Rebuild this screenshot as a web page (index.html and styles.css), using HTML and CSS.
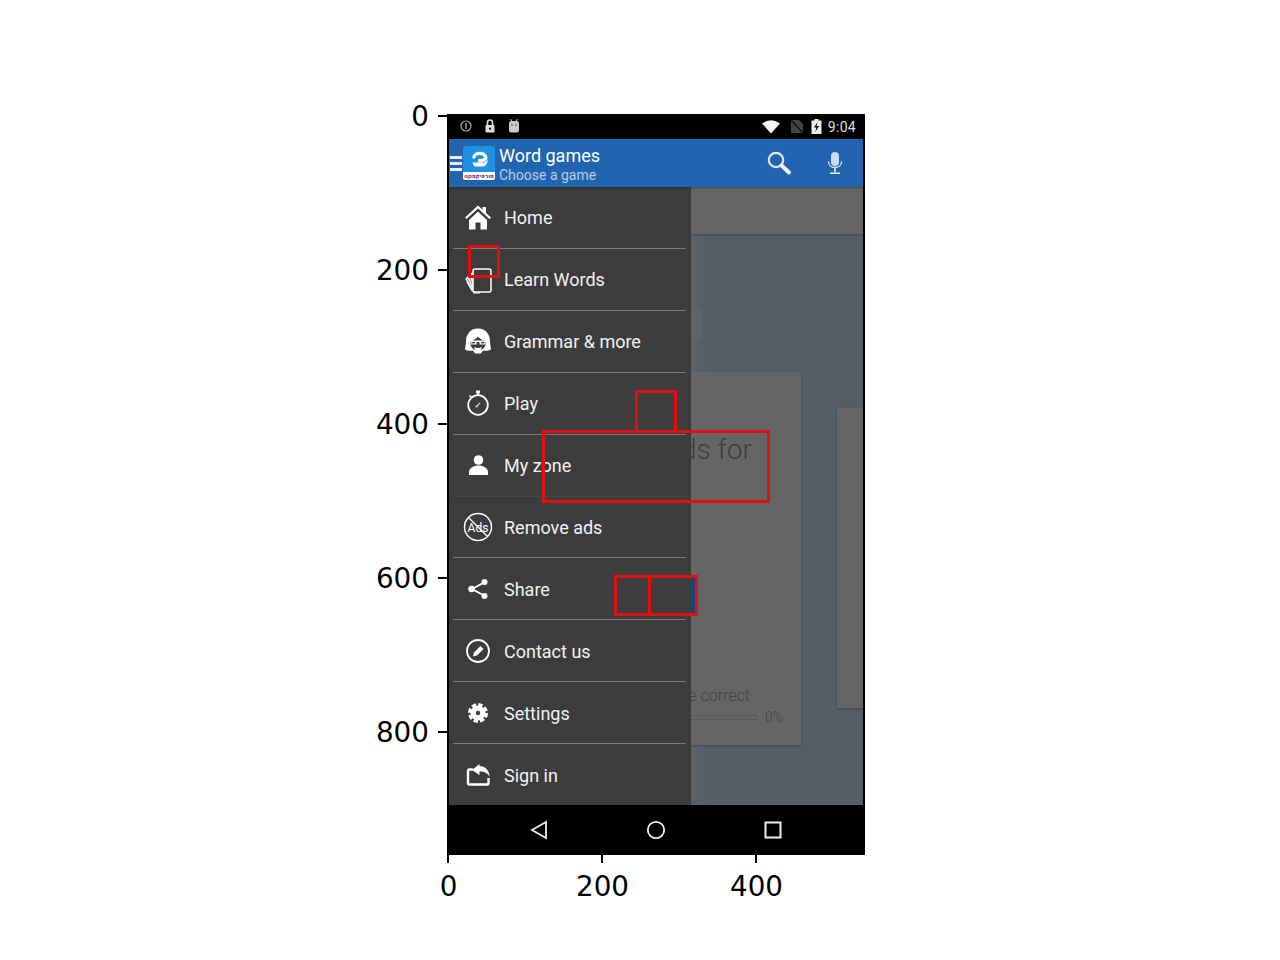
FILE: index.html
```html
<!DOCTYPE html>
<html lang="en">
<head>
    <meta charset="UTF-8">
    <meta name="viewport" content="width=device-width, initial-scale=1.0">
    <title>Word games - annotated screenshot</title>
    <link rel="stylesheet" href="styles.css">
</head>
<body>
<div class="figure">

    <!-- axis ticks -->
    <div class="ytick yt0"><span>0</span></div>
    <div class="ytick yt200"><span>200</span></div>
    <div class="ytick yt400"><span>400</span></div>
    <div class="ytick yt600"><span>600</span></div>
    <div class="ytick yt800"><span>800</span></div>
    <div class="xtick xt0"><span>0</span></div>
    <div class="xtick xt200"><span>200</span></div>
    <div class="xtick xt400"><span>400</span></div>

    <div class="axes">
        <!-- status bar -->
        <div class="status">
            <div class="status-left">
                <svg width="14" height="14" viewBox="0 0 14 14"><circle cx="7" cy="7" r="5" fill="none" stroke="#aaa" stroke-width="1.2"/><rect x="6.3" y="4" width="1.4" height="6" fill="#aaa"/></svg>
                <svg width="14" height="16" viewBox="0 0 14 16"><path d="M4.5 7V4.500a2.500 2.500 0 0 1 5 0V7" fill="none" stroke="#ddd" stroke-width="1.6"/><rect x="2.500" y="7" width="9" height="7.500" rx="1" fill="#ddd"/><circle cx="7" cy="10.700" r="1.100" fill="#000"/></svg>
                <svg width="14" height="16" viewBox="0 0 14 16"><path d="M3.500 1l1.400 2.500M10.500 1L9.100 3.500" stroke="#ccc" stroke-width="1"/><rect x="2" y="3" width="10" height="11.500" rx="2.500" fill="#ccc"/><circle cx="5" cy="7" r=".8" fill="#333"/><circle cx="9" cy="7" r=".8" fill="#333"/></svg>
            </div>
            <div class="status-right">
                <svg width="20" height="15" viewBox="0 0 20 15"><path d="M1 4.500Q10-2 19 4.500L10 14.500z" fill="#f4f4f4"/></svg>
                <svg width="14" height="15" viewBox="0 0 14 15"><path d="M1 1h8l4 4v9H1z" fill="#444"/><path d="M1 1l12 13" stroke="#111" stroke-width="1.400"/></svg>
                <svg width="11" height="15" viewBox="0 0 11 15"><path d="M3.500 0h4v1.500H10.500V15H.5V1.500h3z" fill="#eee"/><path d="M6.500 3L3 8.500h2.300L4.300 13 8 7H5.700z" fill="#111"/></svg>
                <span class="clock">9:04</span>
            </div>
        </div>

        <!-- app bar -->
        <div class="appbar">
            <div class="burger"><i></i><i></i><i></i></div>
            <div class="logo">
                <svg width="32" height="26" viewBox="0 0 32 26"><path d="M11 11C12 6.500 20.500 6 22.500 10.500 23.500 13.500 20.500 15 16.500 14.500" fill="none" stroke="#fff" stroke-width="3.400" stroke-linecap="round"/><path d="M9.500 16.500H20c2.500 0 4-1.500 4.500-3.500.5 4-1.500 7.500-5 7.500H13c-2 0-3-2-3.500-4z" fill="#fff"/></svg>
                <span class="logo-label">op<b>סורפיקס</b></span>
            </div>
            <div class="titles">
                <div class="title">Word games</div>
                <div class="subtitle">Choose a game</div>
            </div>
            <div class="actions">
                <svg width="26" height="26" viewBox="0 0 26 26"><circle cx="10" cy="10" r="7.200" fill="none" stroke="#dfe8f2" stroke-width="2.200"/><path d="M15.500 15.500L23 22.500" stroke="#f6f6f6" stroke-width="4" stroke-linecap="round"/></svg>
                <svg width="16" height="24" viewBox="0 0 16 24"><rect x="4" y="1" width="8" height="14" rx="4" fill="#cfdcea"/><path d="M1.500 10.500c0 8 13 8 13 0" fill="none" stroke="#dfe8f2" stroke-width="1.300"/><path d="M8 17v4M3 22.300h10" stroke="#f0f4f8" stroke-width="1.600"/></svg>
            </div>
        </div>

        <!-- drawer + dimmed page -->
        <div class="middle">
            <ul class="drawer">
                <li class="row">
                    <svg class="icon" width="30" height="30" viewBox="0 0 30 30"><path d="M15 3.500L2 15.500l1.500 1.500L15 6.500 26.500 17l1.500-1.500-5-4.600V5h-3.500v2.800z" fill="#fff"/><path d="M6 18L15 9.500 24 18v9.500h-6.500v-7h-5v7H6z" fill="#fff"/></svg>
                    <span>Home</span>
                </li>
                <li class="row">
                    <svg class="icon" width="30" height="30" viewBox="0 0 30 30"><path d="M3 15l6-6 7 20-5 0z" fill="#9a9a9a" stroke="#fff" stroke-width="1.200"/><path d="M4 18l5 9M5.500 14l5.500 14M7.500 12l5.500 16" stroke="#fff" stroke-width="1.100"/><rect x="10" y="5" width="18" height="23" rx="2" fill="#3c3c3c" stroke="#fff" stroke-width="1.500"/></svg>
                    <span>Learn Words</span>
                </li>
                <li class="row">
                    <svg class="icon" width="30" height="30" viewBox="0 0 30 30"><path d="M15 2.500C7 2.500 3 9 3 15c0 4-1 7-1 8.500 3 2 7 1 8 1l2 3h6l2-3c1 0 5 1 8-1 0-1.500-1-4.500-1-8.500 0-6-4-12.500-12-12.500z" fill="#fff"/><path d="M7 15.500c3-1 6-2.500 8-5 2 2.500 5 4 8 5 0 5-3 9-8 9s-8-4-8-9z" fill="#3c3c3c"/><path d="M6.500 14.500h17v1.500h-1v2.500h-6V16h-3v2.500h-6V16h-1z" fill="#fff"/><rect x="8.500" y="16" width="3.500" height="1.400" fill="#3c3c3c"/><rect x="18" y="16" width="3.500" height="1.400" fill="#3c3c3c"/><path d="M11 21q4 2 8 0-1 4-4 4t-4-4z" fill="#fff"/></svg>
                    <span>Grammar &amp; more</span>
                </li>
                <li class="row">
                    <svg class="icon" width="30" height="30" viewBox="0 0 30 30"><circle cx="15" cy="17" r="9.800" fill="none" stroke="#fff" stroke-width="1.800"/><rect x="13" y="2.500" width="4" height="3" fill="#fff"/><path d="M15 5v2M6.500 7.500l2.500 2.500" stroke="#fff" stroke-width="1.600"/><path d="M13.500 18.500l3.500-3.500" stroke="#ccc" stroke-width="1.200"/><circle cx="13.500" cy="18.500" r="1.100" fill="#ddd"/></svg>
                    <span>Play</span>
                </li>
                <li class="row row-faint">
                    <svg class="icon" width="30" height="30" viewBox="0 0 30 30"><circle cx="15.500" cy="10" r="4.800" fill="#fff"/><path d="M6 25v-3c0-4 5-6.500 9.500-6.500S25 18 25 22v3z" fill="#fff"/></svg>
                    <span>My zone</span>
                </li>
                <li class="row">
                    <svg class="icon" width="30" height="30" viewBox="0 0 30 30"><circle cx="15" cy="15" r="13.500" fill="none" stroke="#fff" stroke-width="1.500"/><path d="M5.500 5.500l19 19" stroke="#fff" stroke-width="1.300"/><text x="15" y="19.500" class="ads-text">Ads</text></svg>
                    <span>Remove ads</span>
                </li>
                <li class="row">
                    <svg class="icon" width="30" height="30" viewBox="0 0 30 30"><path d="M21 8.500L9 15l12 6.500" fill="none" stroke="#fff" stroke-width="1.800"/><circle cx="21.500" cy="8" r="3" fill="#fff"/><circle cx="8.500" cy="15" r="3.200" fill="#fff"/><circle cx="21.500" cy="22" r="3" fill="#fff"/></svg>
                    <span>Share</span>
                </li>
                <li class="row">
                    <svg class="icon" width="30" height="30" viewBox="0 0 30 30"><circle cx="15" cy="15" r="11" fill="none" stroke="#fff" stroke-width="1.800"/><path d="M10 20.500l1-4 6.500-6.500 3 3-6.500 6.500z" fill="#fff"/></svg>
                    <span>Contact us</span>
                </li>
                <li class="row">
                    <svg class="icon" width="30" height="30" viewBox="0 0 30 30"><circle cx="15" cy="15" r="7.500" fill="#fff"/><circle cx="15" cy="15" r="8.400" fill="none" stroke="#fff" stroke-width="3.200" stroke-dasharray="4.400 2.200"/><circle cx="15" cy="15" r="2.200" fill="#3c3c3c"/></svg>
                    <span>Settings</span>
                </li>
                <li class="row">
                    <svg class="icon" width="30" height="30" viewBox="0 0 30 30"><path d="M10 9.500H6.500a1.500 1.500 0 0 0-1.500 1.500v12a1.500 1.500 0 0 0 1.500 1.500H24a1.500 1.500 0 0 0 1.500-1.500v-5" fill="none" stroke="#fff" stroke-width="2.400"/><path d="M16.500 4L9 10l7.500 5v-3.500c4-.5 7.500 1 10 5 0-6-4.500-10.500-10-10.500z" fill="#fff"/></svg>
                    <span>Sign in</span>
                </li>
            </ul>

            <div class="page">
                <div class="tabs"></div>
                <div class="cards">
                    <div class="card">
                        <div class="card-head">ds for</div>
                        <div class="card-foot">
                            <div class="correct">e correct</div>
                            <div class="progress"><div class="track"></div><span>0%</span></div>
                        </div>
                    </div>
                    <div class="card card-next"><div class="next-line"></div></div>
                </div>
                <div class="chip"></div>
                <div class="sliver"></div>
            </div>
        </div>

        <!-- android nav bar -->
        <div class="navbar">
            <svg width="18" height="20" viewBox="0 0 18 20"><path d="M16 2v16L2 10z" fill="none" stroke="#eee" stroke-width="1.800"/></svg>
            <svg width="20" height="20" viewBox="0 0 20 20"><circle cx="10" cy="10" r="8.200" fill="none" stroke="#eee" stroke-width="1.800"/></svg>
            <svg width="18" height="18" viewBox="0 0 18 18"><rect x="1.500" y="1.500" width="15" height="15" fill="none" stroke="#eee" stroke-width="2"/></svg>
        </div>
    </div>

    <!-- red annotation boxes -->
    <div class="mark mark-a"></div>
    <div class="mark mark-b"></div>
    <div class="mark mark-c"></div>
    <div class="mark mark-d"></div>
    <div class="mark mark-e"></div>
</div>
</body>
</html>
```

FILE: styles.css
```css
*{
    list-style-type: none;
    box-sizing: border-box;
    margin:0;
    padding:0;
}
body{
    background:#fff;
    font-family:"Roboto","Liberation Sans",sans-serif;
}
.figure{
    position:relative;
    width:1280px;
    height:960px;
    overflow:hidden;
}

/* ticks */
.ytick,.xtick{
    position:absolute;
    background:#000;
    font-family:"DejaVu Sans",sans-serif;
    font-size:27.8px;
    line-height:32px;
    color:#000;
}
.ytick{
    left:438px;
    width:10px;
    height:2px;
}
.ytick span{
    position:absolute;
    right:19px;
    top:-14px;
}
.xtick{
    top:855px;
    width:2px;
    height:8px;
}
.xtick span{
    position:absolute;
    left:1.5px;
    top:16px;
    transform:translateX(-50%);
}
.yt0{top:115px;}
.yt200{top:269px;}
.yt400{top:423px;}
.yt600{top:577px;}
.yt800{top:731px;}
.xt0{left:447px;}
.xt200{left:601px;}
.xt400{left:755px;}

/* screenshot */
.axes{
    position:absolute;
    left:447px;
    top:114px;
    width:418px;
    height:741px;
    border:solid #000;
    border-width:1px 2px;
    display:flex;
    flex-direction:column;
}
.status{
    height:24px;
    flex:none;
    background:#000;
    display:flex;
    justify-content:space-between;
    align-items:center;
    padding:0 7px 2px 10px;
}
.status-left,.status-right{
    display:flex;
    align-items:center;
}
.status-left{gap:10px;}
.status-right{gap:7px;}
.status-right svg:first-child{margin-right:2px;margin-left:2px;}
.clock{
    color:#ddd;
    font-size:14px;
    letter-spacing:.3px;
    margin-left:-1px;
    padding-top:2px;
}
.appbar{
    height:48px;
    flex:none;
    background:#2165b1;
    display:flex;
    align-items:center;
    box-shadow:0 1px 2px rgba(0,0,0,.3);
    position:relative;
    z-index:1;
}
.burger{
    width:12px;
    margin-left:1px;
    margin-right:1px;
    display:flex;
    flex-direction:column;
    gap:3px;
}
.burger i{
    display:block;
    height:3px;
    background:#e8eff7;
}
.logo{
    width:32px;
    height:34px;
    background:#1f8fe0;
    border-radius:3px 3px 2px 2px;
    display:flex;
    flex-direction:column;
    align-items:center;
    overflow:hidden;
}
.logo svg{flex:none;}
.logo-label{
    width:32px;
    height:8px;
    background:#fff;
    color:#c0306a;
    font-family:"DejaVu Sans",sans-serif;
    font-size:5.5px;
    line-height:8px;
    font-weight:bold;
    white-space:nowrap;
    text-align:center;
}
.logo-label b{color:#5a2a90;}
.titles{
    margin-left:4px;
    padding-top:2px;
    flex:1;
}
.title{
    font-size:18px;
    line-height:21px;
    color:#fff;
}
.subtitle{
    font-size:14px;
    line-height:16px;
    color:#b7cde6;
    padding-top:1px;
}
.actions{
    display:flex;
    align-items:center;
    gap:35px;
    padding-right:20px;
}
.middle{
    flex:1;
    display:flex;
    min-height:0;
}
.drawer{
    width:242px;
    flex:none;
    background:#3c3c3c;
    display:flex;
    flex-direction:column;
}
.row{
    flex:1;
    display:flex;
    align-items:center;
    gap:11px;
    margin:0 5px 0 4px;
    padding-left:10px;
    border-bottom:1px solid #7a7a7a;
    color:#f2f2f2;
    font-size:18px;
}
.row span{padding-top:1px;}
.row:last-child{border-bottom:none;}
.row-faint{border-bottom-color:#484848;}
.icon{flex:none;}
.ads-text{
    font-family:"Roboto",sans-serif;
    font-size:12px;
    fill:#fff;
    text-anchor:middle;
}

/* dimmed page behind the drawer */
.page{
    flex:1;
    background:linear-gradient(90deg,#5c6268,#555e67 16px);
    overflow:hidden;
    display:flex;
    flex-direction:column;
    min-width:0;
    position:relative;
}
.tabs{
    height:47px;
    flex:none;
    background:#656565;
    box-shadow:0 1px 2px rgba(0,0,0,.25);
}
.cards{
    flex:1;
    display:flex;
    gap:36px;
    padding-top:138px;
    align-items:flex-start;
}
.card{
    width:110px;
    height:373px;
    flex:none;
    background:#666;
    box-shadow:0 1px 2px rgba(0,0,0,.25);
    display:flex;
    flex-direction:column;
    justify-content:space-between;
    overflow:hidden;
}
.card-head{
    display:flex;
    justify-content:flex-end;
    white-space:nowrap;
    padding:60px 49px 0 0;
    font-size:28px;
    line-height:36px;
    font-weight:300;
    color:#3f3f3f;
}
.card-foot{
    padding-bottom:18px;
    color:#444;
}
.correct{
    display:flex;
    justify-content:flex-end;
    white-space:nowrap;
    padding-right:51px;
    font-size:16px;
    line-height:20px;
    font-weight:300;
}
.progress{
    display:flex;
    align-items:center;
    margin-top:1px;
    font-size:14px;
    line-height:20px;
    font-weight:300;
}
.track{
    width:66px;
    height:5px;
    margin-right:8px;
    border:1px solid #5a5a5a;
    border-left:none;
    border-radius:0 2px 2px 0;
}
.card-next{
    width:60px;
    height:300px;
    margin-top:36px;
    background:#656565;
    display:block;
}
.next-line{
    margin:275px 0 0 16px;
    height:1px;
    background:#5e5e5e;
}
.chip{
    position:absolute;
    left:0;
    top:121px;
    width:10px;
    height:32px;
    background:#5d646b;
}
.sliver{
    position:absolute;
    left:0;
    top:391px;
    width:4px;
    height:35px;
    background:#124677;
}
.navbar{
    height:49px;
    flex:none;
    background:#000;
    display:flex;
    align-items:center;
    gap:98px;
    padding-left:81px;
}

/* red annotation boxes */
.mark{
    position:absolute;
    border:3px solid #e00f14;
}
.mark-a{left:468px;top:245px;width:32px;height:33px;}
.mark-b{left:635px;top:390px;width:42px;height:43px;}
.mark-c{left:542px;top:430px;width:228px;height:73px;}
.mark-d{left:614px;top:575px;width:37px;height:41px;}
.mark-e{left:648px;top:575px;width:50px;height:41px;}
```
